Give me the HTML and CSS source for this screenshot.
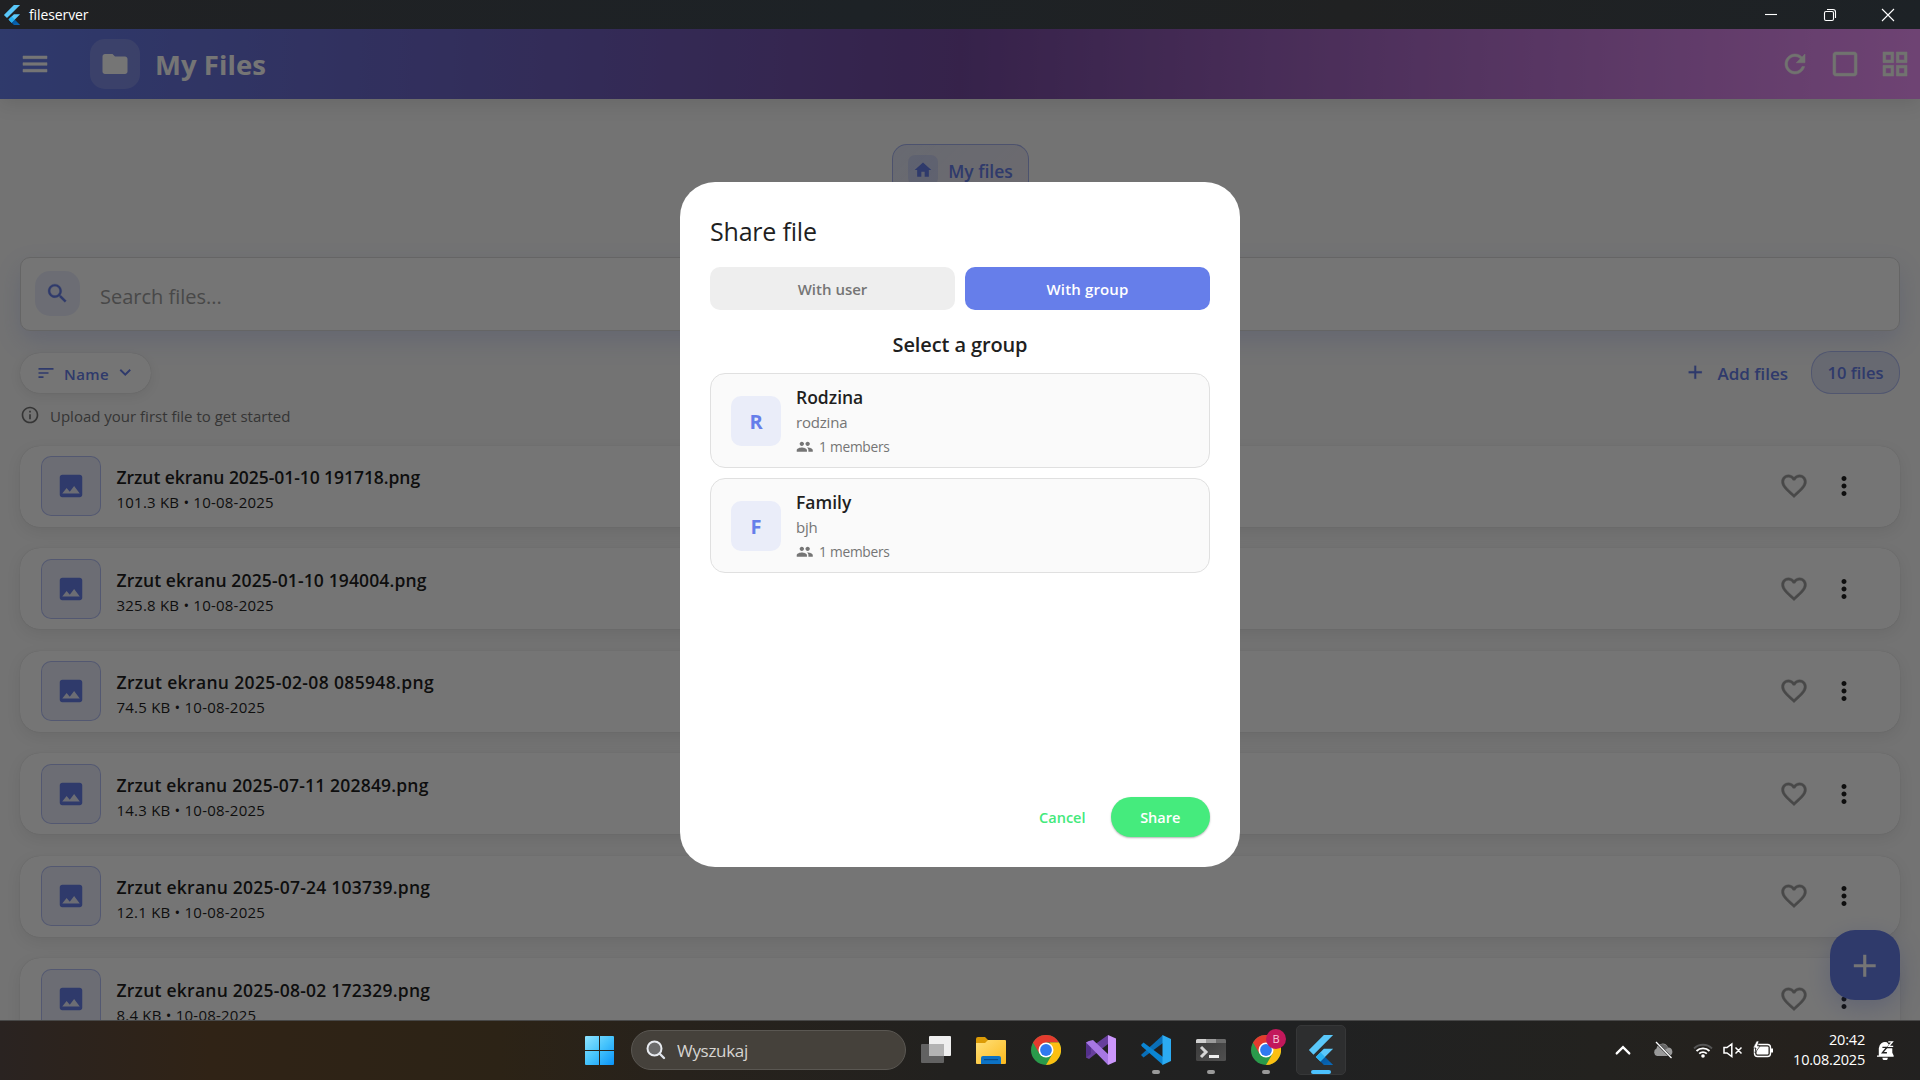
FILE: index.html
```html
<!DOCTYPE html>
<html lang="en">
<head>
<meta charset="utf-8">
<title>fileserver</title>
<link rel="stylesheet" href="styles.css">
</head>
<body>
<svg class="sprite" width="0" height="0">
  <defs>
    <linearGradient id="g-win" x1="0" y1="0" x2="1" y2="1"><stop offset="0" stop-color="#8fe4ff"/><stop offset=".5" stop-color="#45c3fc"/><stop offset="1" stop-color="#0a93f8"/></linearGradient>
    <linearGradient id="g-folder" x1="0" y1="0" x2="1" y2="1"><stop offset="0" stop-color="#ffe07a"/><stop offset="1" stop-color="#fbb91d"/></linearGradient>
    <linearGradient id="g-flutter" x1="0" y1="0" x2="1" y2="1"><stop offset="0" stop-color="#02539a"/><stop offset="1" stop-color="#0a6bbb"/></linearGradient>
    <linearGradient id="g-term" x1="0" y1="0" x2="1" y2="1"><stop offset="0" stop-color="#3a3a3a"/><stop offset="1" stop-color="#505050"/></linearGradient>
  </defs>
  <symbol id="i-menu" viewBox="0 0 24 24"><path d="M3 18h18v-2H3v2zm0-5h18v-2H3v2zm0-7v2h18V6H3z"/></symbol>
  <symbol id="i-folder" viewBox="0 0 24 24"><path d="M10 4H4c-1.1 0-1.99.9-1.99 2L2 18c0 1.1.9 2 2 2h16c1.1 0 2-.9 2-2V8c0-1.1-.9-2-2-2h-8l-2-2z"/></symbol>
  <symbol id="i-refresh" viewBox="0 0 24 24"><path d="M17.65 6.35C16.2 4.9 14.21 4 12 4c-4.42 0-7.99 3.58-7.99 8s3.57 8 7.99 8c3.73 0 6.84-2.55 7.73-6h-2.08c-.82 2.33-3.04 4-5.65 4-3.31 0-6-2.69-6-6s2.69-6 6-6c1.66 0 3.14.69 4.22 1.78L13 11h7V4l-2.35 2.35z"/></symbol>
  <symbol id="i-box" viewBox="0 0 24 24"><path d="M19 5v14H5V5h14m0-2H5c-1.1 0-2 .9-2 2v14c0 1.1.9 2 2 2h14c1.1 0 2-.9 2-2V5c0-1.1-.9-2-2-2z"/></symbol>
  <symbol id="i-grid" viewBox="0 0 24 24"><path d="M3 3v8h8V3H3zm6 6H5V5h4v4zm-6 4v8h8v-8H3zm6 6H5v-4h4v4zm4-16v8h8V3h-8zm6 6h-4V5h4v4zm-6 4v8h8v-8h-8zm6 6h-4v-4h4v4z"/></symbol>
  <symbol id="i-home" viewBox="0 0 24 24"><path d="M10 20v-6h4v6h5v-8h3L12 3 2 12h3v8z"/></symbol>
  <symbol id="i-search" viewBox="0 0 24 24"><path d="M15.5 14h-.79l-.28-.27C15.41 12.59 16 11.11 16 9.5 16 5.91 13.09 3 9.5 3S3 5.91 3 9.5 5.91 16 9.5 16c1.61 0 3.09-.59 4.23-1.57l.27.28v.79l5 4.99L20.49 19l-4.99-5zm-6 0C7.01 14 5 11.99 5 9.5S7.01 5 9.5 5 14 7.01 14 9.5 11.99 14 9.5 14z"/></symbol>
  <symbol id="i-sort" viewBox="0 0 24 24"><path d="M3 18h6v-2H3v2zM3 6v2h18V6H3zm0 7h12v-2H3v2z"/></symbol>
  <symbol id="i-more" viewBox="0 0 24 24"><path d="M16.59 8.59L12 13.17 7.41 8.59 6 10l6 6 6-6z"/></symbol>
  <symbol id="i-info" viewBox="0 0 24 24"><path d="M11 7h2v2h-2zm0 4h2v6h-2zm1-9C6.48 2 2 6.48 2 12s4.48 10 10 10 10-4.48 10-10S17.52 2 12 2zm0 18c-4.41 0-8-3.59-8-8s3.59-8 8-8 8 3.59 8 8-3.59 8-8 8z"/></symbol>
  <symbol id="i-image" viewBox="0 0 24 24"><path d="M21 19V5c0-1.1-.9-2-2-2H5c-1.1 0-2 .9-2 2v14c0 1.1.9 2 2 2h14c1.1 0 2-.9 2-2zM8.5 13.5l2.5 3.01L14.5 12l4.5 6H5l3.5-4.5z"/></symbol>
  <symbol id="i-heart" viewBox="0 0 24 24"><path d="M16.5 3c-1.74 0-3.41.81-4.5 2.09C10.91 3.81 9.24 3 7.5 3 4.42 3 2 5.42 2 8.5c0 3.78 3.4 6.86 8.55 11.54L12 21.35l1.45-1.32C18.6 15.36 22 12.28 22 8.5 22 5.42 19.58 3 16.5 3zm-4.4 15.55l-.1.1-.1-.1C7.14 14.24 4 11.39 4 8.5 4 6.5 5.5 5 7.5 5c1.54 0 3.04.99 3.57 2.36h1.87C13.46 5.99 14.96 5 16.5 5c2 0 3.5 1.5 3.5 3.5 0 2.89-3.14 5.74-7.9 10.05z"/></symbol>
  <symbol id="i-dots" viewBox="0 0 24 24"><path d="M12 8c1.1 0 2-.9 2-2s-.9-2-2-2-2 .9-2 2 .9 2 2 2zm0 2c-1.1 0-2 .9-2 2s.9 2 2 2 2-.9 2-2-.9-2-2-2zm0 6c-1.1 0-2 .9-2 2s.9 2 2 2 2-.9 2-2-.9-2-2-2z"/></symbol>
  <symbol id="i-people" viewBox="0 0 24 24"><path d="M16 11c1.66 0 2.99-1.34 2.99-3S17.66 5 16 5c-1.66 0-3 1.34-3 3s1.34 3 3 3zm-8 0c1.66 0 2.99-1.34 2.99-3S9.66 5 8 5C6.34 5 5 6.34 5 8s1.34 3 3 3zm0 2c-2.33 0-7 1.17-7 3.5V19h14v-2.5c0-2.33-4.67-3.5-7-3.5zm8 0c-.29 0-.62.02-.97.05 1.16.84 1.97 1.97 1.97 3.45V19h6v-2.5c0-2.33-4.67-3.5-7-3.5z"/></symbol>
  <symbol id="i-add" viewBox="0 0 24 24"><path d="M19 13h-6v6h-2v-6H5v-2h6V5h2v6h6v2z"/></symbol>
  <symbol id="i-flutter" viewBox="0 0 24 24"><path fill="#5ac8fa" d="M14.3 0 2.3 12 6 15.7 21.7 0zM14.3 11.07 7.86 17.53l3.7 3.7L21.7 11.07z"/><path fill="url(#g-flutter)" d="M11.56 21.23 14.33 24h7.37l-6.46-6.47z"/><path fill="#29b2f2" d="m7.86 17.53 3.7-3.68 3.68 3.68-3.68 3.7z"/></symbol>
  <symbol id="i-chrome" viewBox="0 0 30 30"><circle cx="15" cy="15" r="15" fill="#2a9a4b"/><path fill="#e33b2e" d="M2 7.5A15 15 0 0 1 28 7.5H15L8.5 18.8z"/><path fill="#fcbf12" d="M28 7.5A15 15 0 0 1 15 30l6.5-11.2L19 7.5z"/><circle cx="15" cy="15" r="7.5" fill="#fff"/><circle cx="15" cy="15" r="5.9" fill="#2f7af0"/></symbol>
</svg>

<header class="titlebar">
  <svg class="titlebar-logo"><use href="#i-flutter"/></svg>
  <span class="titlebar-name">fileserver</span>
  <div class="window-controls">
    <svg viewBox="0 0 14 14"><path d="M1 6.5h12"/></svg>
    <svg viewBox="0 0 14 14"><rect x="1.5" y="3.5" width="9" height="9" rx="1.5"/><path d="M4 1.5h6a2.5 2.5 0 0 1 2.500 2.500v6"/></svg>
    <svg viewBox="0 0 14 14"><path d="M1 1l12 12M13 1L1 13"/></svg>
  </div>
</header>

<main class="app">
  <div class="appbar">
    <svg class="icon menu-icon"><use href="#i-menu"/></svg>
    <div class="appbar-tile"><svg class="icon icon-30"><use href="#i-folder"/></svg></div>
    <h1>My Files</h1>
    <div class="appbar-actions">
      <svg class="icon icon-30"><use href="#i-refresh"/></svg>
      <svg class="icon icon-32"><use href="#i-box"/></svg>
      <svg class="icon icon-32"><use href="#i-grid"/></svg>
    </div>
  </div>

  <nav class="breadcrumb">
    <div class="crumb"><span class="crumb-tile"><svg class="icon icon-20"><use href="#i-home"/></svg></span><span>My files</span></div>
  </nav>

  <div class="search">
    <span class="search-tile"><svg class="icon icon-25"><use href="#i-search"/></svg></span>
    <span class="search-hint">Search files...</span>
  </div>

  <div class="toolbar">
    <div class="sort"><svg class="icon icon-20"><use href="#i-sort"/></svg><span>Name</span><svg class="icon icon-22"><use href="#i-more"/></svg></div>
    <div class="toolbar-right">
      <div class="add"><svg class="icon icon-22"><use href="#i-add"/></svg><span>Add files</span></div>
      <div class="count">10 files</div>
    </div>
  </div>
  <div class="hint"><svg class="icon icon-20"><use href="#i-info"/></svg><span>Upload your first file to get started</span></div>

  <ul class="files">
    <li class="file"><span class="thumb"><svg class="icon icon-30"><use href="#i-image"/></svg></span><div class="file-text"><p class="file-name">Zrzut ekranu 2025-01-10 191718.png</p><p class="file-meta">101.3 KB • 10-08-2025</p></div><svg class="icon icon-30 heart"><use href="#i-heart"/></svg><svg class="icon icon-30"><use href="#i-dots"/></svg></li>
    <li class="file"><span class="thumb"><svg class="icon icon-30"><use href="#i-image"/></svg></span><div class="file-text"><p class="file-name">Zrzut ekranu 2025-01-10 194004.png</p><p class="file-meta">325.8 KB • 10-08-2025</p></div><svg class="icon icon-30 heart"><use href="#i-heart"/></svg><svg class="icon icon-30"><use href="#i-dots"/></svg></li>
    <li class="file"><span class="thumb"><svg class="icon icon-30"><use href="#i-image"/></svg></span><div class="file-text"><p class="file-name">Zrzut ekranu 2025-02-08 085948.png</p><p class="file-meta">74.5 KB • 10-08-2025</p></div><svg class="icon icon-30 heart"><use href="#i-heart"/></svg><svg class="icon icon-30"><use href="#i-dots"/></svg></li>
    <li class="file"><span class="thumb"><svg class="icon icon-30"><use href="#i-image"/></svg></span><div class="file-text"><p class="file-name">Zrzut ekranu 2025-07-11 202849.png</p><p class="file-meta">14.3 KB • 10-08-2025</p></div><svg class="icon icon-30 heart"><use href="#i-heart"/></svg><svg class="icon icon-30"><use href="#i-dots"/></svg></li>
    <li class="file"><span class="thumb"><svg class="icon icon-30"><use href="#i-image"/></svg></span><div class="file-text"><p class="file-name">Zrzut ekranu 2025-07-24 103739.png</p><p class="file-meta">12.1 KB • 10-08-2025</p></div><svg class="icon icon-30 heart"><use href="#i-heart"/></svg><svg class="icon icon-30"><use href="#i-dots"/></svg></li>
    <li class="file"><span class="thumb"><svg class="icon icon-30"><use href="#i-image"/></svg></span><div class="file-text"><p class="file-name">Zrzut ekranu 2025-08-02 172329.png</p><p class="file-meta">8.4 KB • 10-08-2025</p></div><svg class="icon icon-30 heart"><use href="#i-heart"/></svg><svg class="icon icon-30"><use href="#i-dots"/></svg></li>
  </ul>

  <div class="fab"><svg class="icon icon-fab"><use href="#i-add"/></svg></div>

  <div class="scrim">
    <section class="dialog">
      <h2>Share file</h2>
      <div class="tabs"><div class="tab">With user</div><div class="tab tab-active">With group</div></div>
      <h3>Select a group</h3>
      <div class="groups">
        <div class="group"><span class="avatar">R</span><div class="group-text"><p class="group-name">Rodzina</p><p class="group-desc">rodzina</p><p class="group-members"><svg class="icon"><use href="#i-people"/></svg><span>1 members</span></p></div></div>
        <div class="group"><span class="avatar">F</span><div class="group-text"><p class="group-name">Family</p><p class="group-desc">bjh</p><p class="group-members"><svg class="icon"><use href="#i-people"/></svg><span>1 members</span></p></div></div>
      </div>
      <div class="dialog-actions"><span class="cancel">Cancel</span><span class="share">Share</span></div>
    </section>
  </div>
</main>

<footer class="taskbar">
  <div class="dock">
    <svg class="winlogo" viewBox="0 0 29 29"><path fill="url(#g-win)" d="M1 0h13v14H0V1a1 1 0 0 1 1-1zM15 0h13a1 1 0 0 1 1 1v13H15zM0 15h14v14H1a1 1 0 0 1-1-1zM15 15h14v13a1 1 0 0 1-1 1H15z"/></svg>
    <div class="tasksearch">
      <svg viewBox="0 0 20 20" width="20" height="20"><circle cx="8.500" cy="8.500" r="7" fill="#6b6b6b" stroke="#e8ebf0" stroke-width="2"/><path d="M13.500 13.500 18 18" stroke="#dfe3ea" stroke-width="2.400" stroke-linecap="round"/></svg>
      <span>Wyszukaj</span>
    </div>
    <div class="dock-apps">
      <div class="dock-app"><svg viewBox="0 0 30 30"><rect x="8" y="1" width="22" height="20" rx="1" fill="#efefef"/><rect x="0" y="9" width="23" height="19" rx="1" fill="#626262"/><path d="M8 9h15v12H8z" fill="#b3b3b3"/></svg></div>
      <div class="dock-app"><svg viewBox="0 0 30 30"><path fill="#dc9b06" d="M0 4a2 2 0 0 1 2-2h7l3 3v5H0z"/><path fill="url(#g-folder)" d="M0 8h9l3-3h17a1 1 0 0 1 1 1v22a1 1 0 0 1-1 1H1a1 1 0 0 1-1-1z"/><path fill="#0c72c5" d="M5 29v-6a2 2 0 0 1 2-2h16a2 2 0 0 1 2 2v6z"/><path fill="#084a8a" d="M8 24h14v1.200H8z"/></svg></div>
      <div class="dock-app"><svg><use href="#i-chrome"/></svg></div>
      <div class="dock-app"><svg viewBox="0 0 30 30"><path fill="#673f9c" d="M0 7.500 3 6l5 4 14-10v9L3 24l-3-1.500z"/><path fill="#53308a" d="M0 7.500 5 12v7l-5 3.500z"/><path fill="#a777e3" d="M3 6 7 5l15 14v11L5 12.500 0 7.500z"/><path fill="#cb96fb" d="M22 0l8 3.500v23L22 30z"/></svg></div>
      <div class="dock-app running"><svg viewBox="0 0 30 30"><path fill="#0a6fb8" d="M0 20l2.500 2.500L22 8V0L1 19z"/><path fill="#0b85d2" d="M0 10l2.500-2.500L22 22v8L1 11.500z"/><path fill="#2cabf2" d="M21.500 0 30 4v22l-8.500 4z"/></svg></div>
      <div class="dock-app running"><svg viewBox="0 0 30 30"><rect y="4" width="30" height="22" rx="1.500" fill="url(#g-term)"/><path fill="#d0d0d0" d="M1.500 4H10v4H0V5.500A1.500 1.500 0 0 1 1.500 4z"/><path fill="#9b9b9b" d="M10 4h10v4H10z"/><path fill="#6c6c6c" d="M20 4h8.500A1.500 1.500 0 0 1 30 5.500V8H20z"/><path d="m5 12 5 5-5 5" fill="none" stroke="#d5d5d5" stroke-width="3"/><path fill="#eee" d="M13 20h10v3H13z"/></svg></div>
      <div class="dock-app running"><svg><use href="#i-chrome"/></svg><span class="profile-badge">B</span></div>
      <div class="dock-app active"><svg><use href="#i-flutter"/></svg></div>
    </div>
  </div>
  <div class="tray">
    <svg class="tray-caret" viewBox="0 0 14 14"><path d="M1.500 10 7 4.500 12.500 10" fill="none" stroke="#fff" stroke-width="2" stroke-linecap="round"/></svg>
    <svg class="tray-cloud" viewBox="0 0 20 20"><path d="M4 16a4 4 0 0 1-.5-7.500A6 6 0 0 1 15 7.500a4.300 4.300 0 0 1 1 8.500z" fill="#999"/><path d="M5 6a6 6 0 0 1 10 2l-5 3z" fill="#666"/><path d="m3 2 15 15.500" stroke="#222" stroke-width="2.500"/><path d="m3 2 15.500 16" stroke="#fff" stroke-width="1.300"/></svg>
    <svg class="tray-wifi" viewBox="0 0 20 20" fill="none" stroke="#fff" stroke-width="1.800"><path d="M1 8.500a12.700 12.700 0 0 1 18 0" stroke="#555"/><path d="M3.500 11a9.200 9.200 0 0 1 13 0M6.200 13.600a5.400 5.400 0 0 1 7.600 0"/><circle cx="10" cy="16" r="1.800" fill="#fff" stroke="none"/></svg>
    <svg class="tray-volume" viewBox="0 0 20 20" fill="none" stroke="#fff" stroke-width="1.500"><path d="M1 7.500h3L8.800 4v12.500L4 13H1zM12.500 7.500l6 6M18.500 7.500l-6 6"/></svg>
    <svg class="tray-battery" viewBox="0 0 20 20"><rect x="1.500" y="4.500" width="16" height="12" rx="3" fill="none" stroke="#fff" stroke-width="1.400"/><rect x="3.500" y="6.500" width="12" height="8" rx="1" fill="#fff"/><path d="M18 8.500h2v4h-2z" fill="#fff"/><path d="M3.500 1 0 8h3l-1 5 5-7H4.500L6 1z" fill="#fff" stroke="#222" stroke-width=".7"/></svg>
    <div class="clock"><span>20:42</span><span>10.08.2025</span></div>
    <svg class="tray-bell" viewBox="0 0 20 22"><path d="M2 17V9a7 7 0 0 1 9-6.500L17 9v5l1.500 3v1.500H0V17z" fill="#fff"/><path d="M6 19.500h6a3 3 0 0 1-6 0z" fill="#fff"/><path d="M6 8h5l-5 6h5" fill="none" stroke="#222" stroke-width="1.500"/><path d="M12.500 2.500H17L13 7.500h5" fill="none" stroke="#222" stroke-width="3"/><path d="M12.500 2H17L13 7h5" fill="none" stroke="#fff" stroke-width="1.600"/></svg>
  </div>
</footer>
</body>
</html>
```
FILE: styles.css
```css
* { box-sizing: border-box; margin: 0; padding: 0; }

body {
  width: 1920px;
  height: 1080px;
  overflow: hidden;
  display: flex;
  flex-direction: column;
  font-family: "Open Sans", "Noto Sans", sans-serif;
  color: #1f1f1f;
  white-space: nowrap;
}

.sprite { position: absolute; }
svg { display: block; flex: none; }
.icon { fill: currentColor; }
.icon-20 { width: 20px; height: 20px; }
.icon-22 { width: 22.5px; height: 22.5px; }
.icon-25 { width: 25px; height: 25px; }
.icon-30 { width: 30px; height: 30px; }
.icon-32 { width: 32px; height: 32px; }
.icon-fab { width: 37.5px; height: 37.5px; }

/* Window title bar */
.titlebar {
  flex: none;
  height: 29px;
  display: flex;
  align-items: center;
  padding: 0 25px 0 2px;
  background: linear-gradient(90deg, #202123, #1d2226 45%, #202122 70%, #1d2226);
  color: #fff;
}
.titlebar-logo { width: 20px; height: 20px; margin-right: 7px; }
.titlebar-name { font-size: 14px; letter-spacing: -.1px; line-height: 28px; }
.window-controls { margin-left: auto; display: flex; gap: 44.500px; }
.window-controls svg { width: 14px; height: 14px; fill: none; stroke: #fff; stroke-width: 1.1; }

/* App */
.app {
  flex: none;
  height: 991px;
  position: relative;
  overflow: hidden;
  background: #fafafa;
}

.appbar {
  height: 70px;
  display: flex;
  align-items: center;
  padding: 0 9px 0 19px;
  color: #fff;
  background: linear-gradient(92deg, #667eea 0%, #764ba2 50%, #f093fb 100%);
  box-shadow: 0 5px 18px rgba(0, 0, 0, .1);
}
.menu-icon { width: 32px; height: 32px; margin-right: 39px; stroke: currentColor; stroke-width: .4; }
.appbar-tile {
  width: 50px;
  height: 50px;
  display: grid;
  place-items: center;
  border-radius: 15px;
  background: rgba(255, 255, 255, .17);
}
.appbar h1 { margin: 2px 0 0 15px; font-size: 27.5px; font-weight: 700; letter-spacing: .05px; line-height: 38px; }
.appbar-actions { margin-left: auto; display: flex; align-items: center; gap: 18px; color: #f6fbf2; }
.appbar-actions .icon { stroke: currentColor; stroke-width: .4; }
.appbar-actions .icon:first-child { margin-right: 1px; }

.breadcrumb { height: 158px; padding: 45px 0 0 1px; display: flex; justify-content: center; align-items: flex-start; }
.crumb {
  display: flex;
  align-items: center;
  gap: 10px;
  height: 52px;
  padding: 0 15px;
  border: 1px solid rgba(102, 126, 234, .5);
  border-radius: 15px;
  background: linear-gradient(135deg, rgba(102, 126, 234, .16), rgba(118, 75, 162, .1));
  color: #667eea;
  font-size: 17.5px;
  font-weight: 600;
}
.crumb > span:last-child { padding-top: 1px; }
.crumb-tile { width: 30px; height: 30px; display: grid; place-items: center; border-radius: 7px; background: rgba(102, 126, 234, .16); }

.search {
  height: 74px;
  margin: 0 20px;
  padding: 0 14px 1px;
  display: flex;
  align-items: center;
  border: 1px solid #dcdcdc;
  border-radius: 10px;
  background: #fff;
  box-shadow: 0 10px 25px rgba(102, 126, 234, .2);
}
.search-tile { width: 45px; height: 45px; display: grid; place-items: center; border-radius: 15px; background: rgba(102, 126, 234, .13); color: #667eea; }
.search-tile .icon { stroke: currentColor; stroke-width: .3; }
.search-hint { margin-left: 20px; padding-top: 5px; font-size: 20px; color: #9e9e9e; }

.toolbar { height: 43px; margin: 20px 20px 0; display: flex; align-items: center; justify-content: space-between; color: #667eea; }
.sort {
  width: 131px;
  height: 40px;
  padding-left: 16px;
  display: flex;
  align-items: center;
  border-radius: 20px;
  background: #fff;
  box-shadow: 0 3px 12px rgba(0, 0, 0, .08), 0 0 1px rgba(0, 0, 0, .2);
  font-size: 15px;
  font-weight: 600;
  letter-spacing: .45px;
}
.sort span { margin: 2px 5px 0 8px; }
.toolbar-right { display: flex; align-items: center; gap: 23px; }
.add { display: flex; align-items: center; gap: 11px; font-size: 17px; font-weight: 600; }
.add .icon { stroke: currentColor; stroke-width: .2; }
.add span { padding-top: 1px; }
.count {
  width: 89px;
  height: 43px;
  border: 1px solid rgba(102, 126, 234, .4);
  border-radius: 20px;
  background: rgba(102, 126, 234, .16);
  font-size: 16.5px;
  font-weight: 600;
  line-height: 42px;
  text-align: center;
}
.hint { height: 20px; margin: 11px 20px 0; display: flex; align-items: center; gap: 10px; color: #757575; font-size: 15px; line-height: 20px; }
.hint span { padding-top: 2px; }

.files { list-style: none; margin: 20.7px 20px 0; display: flex; flex-direction: column; gap: 21.5px; }
.file {
  height: 81px;
  padding: 0 41px 0 21px;
  display: flex;
  align-items: center;
  border-radius: 20px;
  background: #fff;
  box-shadow: 0 5px 15px rgba(0, 0, 0, .08), 0 0 1px rgba(0, 0, 0, .2);
}
.thumb { width: 60px; height: 60px; display: grid; place-items: center; border: 1px solid rgba(102, 126, 234, .4); border-radius: 10px; background: rgba(102, 126, 234, .13); color: #667eea; }
.file-text { flex: 1; margin-left: 15.5px; padding-top: 6px; }
.file-name { font-size: 17.5px; font-weight: 600; line-height: 26px; }
.file-meta { font-size: 15px; letter-spacing: .22px; line-height: 24px; }
.file:nth-child(1) .file-name { letter-spacing: -.06px; }
.file:nth-child(2) .file-name { letter-spacing: .13px; }
.file:nth-child(3) .file-name { letter-spacing: .35px; }
.file:nth-child(4) .file-name { letter-spacing: .19px; }
.file:nth-child(n+5) .file-name { letter-spacing: .24px; }
.heart { margin-right: 20px; color: #9e9e9e; stroke: currentColor; stroke-width: .3; }

.fab {
  position: absolute;
  right: 20px;
  bottom: 20px;
  width: 70px;
  height: 70px;
  display: grid;
  place-items: center;
  padding-top: 1px;
  border-radius: 25px;
  background: #667eea;
  color: #fff;
  box-shadow: 0 8px 25px rgba(102, 126, 234, .3);
}

/* Share dialog */
.scrim { position: absolute; inset: 0; display: flex; align-items: center; justify-content: center; background: rgba(0, 0, 0, .54); }
.dialog { width: 560px; height: 685px; padding: 30px; display: flex; flex-direction: column; border-radius: 35px; background: #fff; }
.dialog h2 { height: 55px; padding-top: 2px; font-size: 25px; font-weight: 400; letter-spacing: -.2px; line-height: 34px; }
.tabs { display: flex; gap: 10px; }
.tab { flex: 1; height: 42.5px; border-radius: 10px; background: #eee; color: #757575; font-size: 15px; font-weight: 600; line-height: 44px; text-align: center; }
.tab-active { background: #667eea; color: #fff; letter-spacing: .15px; }
.dialog h3 { height: 63.5px; padding-top: 21px; font-size: 20px; font-weight: 600; letter-spacing: -.12px; line-height: 28px; text-align: center; }
.groups { display: flex; flex-direction: column; gap: 10px; }
.group { height: 95px; padding: 0 20px; display: flex; align-items: center; gap: 15px; border: 1px solid #e0e0e0; border-radius: 15px; background: #fafafa; }
.avatar { width: 50px; height: 50px; border-radius: 10px; background: #eaedf9; color: #667eea; font-size: 20px; font-weight: 700; line-height: 52px; text-align: center; }
.group-text { padding-top: 1.5px; }
.group-name { font-size: 17.5px; font-weight: 600; line-height: 26px; }
.group-desc { font-size: 15px; letter-spacing: -.2px; line-height: 24px; color: #757575; }
.group-members { display: flex; align-items: center; gap: 5.5px; padding-top: 1px; font-size: 13.75px; letter-spacing: -.25px; line-height: 24px; color: #757575; }
.group-members .icon { width: 17.5px; height: 17.5px; }
.dialog-actions { margin-top: auto; height: 40px; display: flex; justify-content: flex-end; align-items: center; gap: 25px; color: #43e97b; font-size: 14.5px; font-weight: 600; }
.cancel { line-height: 42px; padding-top: 1px; }
.share { width: 99.5px; height: 40px; border-radius: 20px; background: #45eb7d; color: #fff; line-height: 42px; text-align: center; box-shadow: 0 1px 2px rgba(0, 0, 0, .3); }

/* Taskbar */
.taskbar {
  flex: none;
  height: 60px;
  display: flex;
  align-items: center;
  justify-content: space-between;
  padding: 0 25px 1px 585px;
  border-top: 1px solid #484848;
  background: linear-gradient(90deg, #2a2321 0, #302316 210px, #2c2316 500px, #27221c 680px, #22211f 950px, #202122 1300px, #23221f 1600px, #25211d 1800px, #222120 1920px);
  color: #fff;
}
.dock, .dock-apps, .tray { display: flex; align-items: center; }
.winlogo { width: 29px; height: 29px; }
.tasksearch {
  width: 275px;
  height: 40px;
  margin: 0 5px 0 17px;
  padding-left: 14px;
  display: flex;
  align-items: center;
  gap: 11px;
  border: 1px solid #5a5752;
  border-radius: 20px;
  background: #45413b;
  color: #d6d4d1;
  font-size: 17px;
  letter-spacing: -.3px;
}
.dock-apps { gap: 5px; }
.dock-app { position: relative; width: 50px; height: 50px; display: grid; place-items: center; border-radius: 5px; }
.dock-app svg { width: 30px; height: 30px; }
.dock-app.running::after, .dock-app.active::after { content: ""; position: absolute; bottom: 1px; left: 50%; width: 8px; height: 4px; transform: translateX(-50%); border-radius: 2px; background: #9a9a9a; }
.dock-app.active { background: #2d2e2f; border: 1px solid #363738; }
.dock-app.active::after { bottom: 0; width: 20px; background: #4cc2ff; }
.profile-badge { position: absolute; left: 25px; top: 4px; width: 20px; height: 20px; border-radius: 50%; background: #c2185b; color: #f6c9da; font-size: 11px; line-height: 20px; text-align: center; }

.tray svg { width: 20px; height: 20px; }
.tray .tray-caret { width: 16px; height: 16px; margin-right: 22px; }
.tray .tray-cloud { margin-right: 20px; }
.tray .tray-wifi { margin-right: 10px; }
.tray .tray-volume { margin-right: 10px; }
.clock { width: 92px; padding-bottom: 1px; display: flex; flex-direction: column; align-items: flex-end; font-size: 14.5px; letter-spacing: -.2px; line-height: 20px; }
.tray .tray-bell { width: 18px; height: 20px; margin-left: 12px; }
```
